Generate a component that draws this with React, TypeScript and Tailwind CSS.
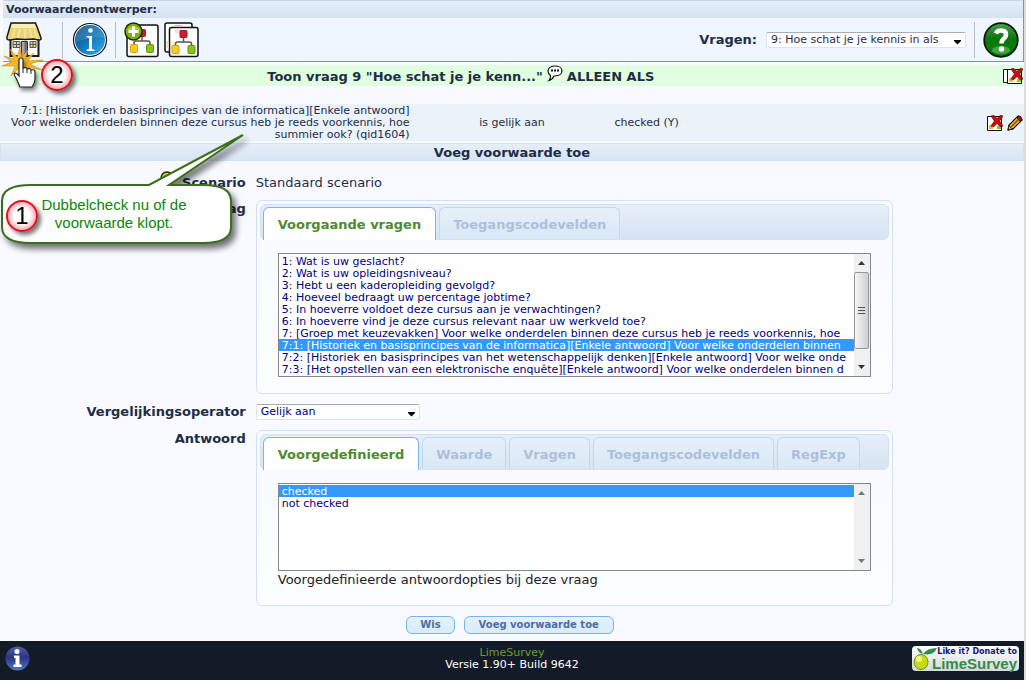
import { useState } from "react";
import type { ReactNode } from "react";

const previousQuestions = [
  "1: Wat is uw geslacht?",
  "2: Wat is uw opleidingsniveau?",
  "3: Hebt u een kaderopleiding gevolgd?",
  "4: Hoeveel bedraagt uw percentage jobtime?",
  "5: In hoeverre voldoet deze cursus aan je verwachtingen?",
  "6: In hoeverre vind je deze cursus relevant naar uw werkveld toe?",
  "7: [Groep met keuzevakken] Voor welke onderdelen binnen deze cursus heb je reeds voorkennis, hoe",
  "7:1: [Historiek en basisprincipes van de informatica][Enkele antwoord] Voor welke onderdelen binnen",
  "7:2: [Historiek en basisprincipes van het wetenschappelijk denken][Enkele antwoord] Voor welke onde",
  "7:3: [Het opstellen van een elektronische enquête][Enkele antwoord] Voor welke onderdelen binnen d",
];

const answers = ["checked", "not checked"];

function HomeIcon() {
  return (
    <svg width="36" height="36" viewBox="0 0 36 36" aria-hidden="true">
      <path d="M4.500 15h28v19h-28z" fill="#fff" stroke="#1a1a1a" strokeWidth="2" />
      <path d="M5 1h24.500l2 5 3.500 10q.5 2-2 2l-6-1-8 .5-8-.5-7 1q-4 0-3-3z" fill="#e8d478" stroke="#1c1808" strokeWidth="1.500" />
      <path d="M6 2h22.500l1.500 4H5.500z" fill="#f8efb9" />
      <path d="M9 7l-3 9M14 7l-2 9M19 7v9M24 7l2 9M28 7l3 9" stroke="#f3e7a4" strokeWidth="1.500" />
      <path d="M7 19.500h7v6H7zM24 19.500h6v6h-6z" fill="#e5d289" stroke="#555" />
      <path d="M10.500 19.500v6M7 22.500h7M27 19.500v6M24 22.500h6" stroke="#555" />
      <path d="M15.500 19.500h6V34h-6z" fill="#7b6668" stroke="#333" />
      <path d="M16 20h2.500v14H16z" fill="#a9a3b8" />
    </svg>
  );
}

function InfoIcon() {
  return (
    <svg width="36" height="36" viewBox="0 0 36 36" aria-hidden="true">
      <defs>
        <linearGradient id="info" x1="0" y1="0" x2="1" y2="1">
          <stop offset="0" stopColor="#0b4f83" />
          <stop offset="0.500" stopColor="#1377b8" />
          <stop offset="1" stopColor="#35b0ee" />
        </linearGradient>
      </defs>
      <circle cx="18" cy="18" r="16.500" fill="#fff" stroke="#111" strokeWidth="1.200" />
      <circle cx="18" cy="18" r="15" fill="url(#info)" />
      <path d="M4 20a14 14 0 0 1 28-5q-16 0-28 5z" fill="#fff" opacity="0.12" />
      <circle cx="18.500" cy="8.500" r="2.300" fill="#fff" />
      <path d="M14.500 14h5.500v13l2.500.8v1.200h-8v-1.200l2.500-.8V16l-2.500-.8z" fill="#fff" />
    </svg>
  );
}

function Tree() {
  return (
    <g>
      <path d="M19 14v5M11 23v-2q0-2 2-2h12q2 0 2 2v2" fill="none" stroke="#555" strokeWidth="1.500" />
      <rect x="15.500" y="7.500" width="7" height="7" rx="1" fill="#cf1f2b" stroke="#9d1520" />
      <rect x="7.500" y="22.500" width="7" height="8" rx="1" fill="#ffc928" stroke="#d79b0c" />
      <rect x="23.500" y="22.500" width="7" height="8" rx="1" fill="#8bc514" stroke="#5f9610" />
    </g>
  );
}

function AddConditionIcon() {
  return (
    <svg width="36" height="36" viewBox="0 0 36 36" aria-hidden="true">
      <rect x="3" y="3" width="31" height="31.500" rx="2" fill="#fff" stroke="#111" strokeWidth="1.500" />
      <g transform="translate(-1 0)">
        <Tree />
      </g>
      <circle cx="9.500" cy="9.500" r="8.500" fill="#7fae13" stroke="#1d2b05" strokeWidth="1.500" />
      <path d="M3 8a7 6 0 0 1 13 0q-6 3-13 0z" fill="#b6d858" opacity="0.7" />
      <path d="M9.500 4.500v10M4.500 9.500h10" stroke="#fff" strokeWidth="3" />
    </svg>
  );
}

function CopyConditionIcon() {
  return (
    <svg width="36" height="36" viewBox="0 0 36 36" aria-hidden="true">
      <rect x="1" y="1" width="27" height="29" rx="2" fill="#fff" stroke="#111" strokeWidth="1.500" />
      <rect x="5.500" y="5.500" width="28.500" height="29" rx="2" fill="#fff" stroke="#111" strokeWidth="1.500" />
      <rect x="11" y="3" width="7" height="2" fill="#efb3b8" />
      <rect x="11" y="6.500" width="7" height="5" rx="1" fill="#f9dfe1" />
      <rect x="2.500" y="19" width="2" height="7" fill="#fbe3a4" />
      <rect x="7" y="19" width="4" height="5" fill="#fff4d2" />
      <g transform="translate(.5 1)">
        <Tree />
      </g>
    </svg>
  );
}

function HelpIcon() {
  return (
    <svg width="36" height="36" viewBox="0 0 36 36" aria-hidden="true">
      <defs>
        <linearGradient id="help" x1="0" y1="0" x2="0" y2="1">
          <stop offset="0" stopColor="#4f9e4f" />
          <stop offset="0.450" stopColor="#0d750d" />
          <stop offset="1" stopColor="#078007" />
        </linearGradient>
      </defs>
      <circle cx="18" cy="18" r="16.800" fill="url(#help)" stroke="#0a1a0a" strokeWidth="1.800" />
      <ellipse cx="18" cy="28" rx="9" ry="4" fill="#8ed08e" opacity="0.45" />
      <path d="M13 11.500q1-3 5-3 5 0 5 4 0 2.500-2.500 4.500-2 1.500-2 4.500" fill="none" stroke="#fff" strokeWidth="4.500" />
      <circle cx="18.500" cy="27" r="2.700" fill="#fff" />
    </svg>
  );
}

function BalloonIcon() {
  return (
    <svg className="mx-1 inline-block -translate-y-1" width="16" height="17" viewBox="0 0 16 17" aria-hidden="true">
      <path d="M8 1c4 0 7 2 7 5s-3 5-7 5l-1 0q-2 4-5 4.500 2-2 1.500-5Q1 9 1 6c0-3 3-5 7-5z" fill="#fff" stroke="#111" strokeWidth="1.200" />
      <path d="M4 5.500h2M7 5.500h2M10 5.500h2" stroke="#111" strokeWidth="2" />
    </svg>
  );
}

function DeleteIcon({ stacked = false }: { stacked?: boolean }) {
  return (
    <svg width={stacked ? 20 : 16} height="16" viewBox={stacked ? "-4 0 20 16" : "0 0 16 16"} aria-hidden="true">
      {stacked && <path d="M-3.500 1.500h5v13h-5z" fill="#fff" stroke="#111" />}
      <path d="M.5 1.500h14v14H.5z" fill="#fff" stroke="#111" />
      <path d="M2 10h4v4H2z" fill="#f5b81c" />
      <path d="M10 11h4v3h-4z" fill="#8bc514" />
      <path d="M4 1l3-.5 3 3 3-3 3 .5-3.500 5L16 11l-3 .5-3-3-3 3-3-.5L7.500 6z" fill="#d00d0d" stroke="#5c0505" strokeWidth="0.800" />
    </svg>
  );
}

function PencilIcon() {
  return (
    <svg width="16" height="16" viewBox="0 0 16 16" aria-hidden="true">
      <path d="M1 15l1-5L11 1q3 0 4 4l-9 9z" fill="#f0b832" stroke="#111" strokeWidth="1.200" />
      <path d="M4 12l8-8" stroke="#7a4c10" strokeWidth="1.500" />
      <path d="M11 1q3 0 4 4l-2 1-3-3z" fill="#c3131c" stroke="#3a0508" />
      <path d="M1 15l1-5 1.500 3 2.500 1z" fill="#e9d9b0" stroke="#111" strokeWidth="0.800" />
      <path d="M1 15l.5-2 1.500 1.500z" fill="#111" />
    </svg>
  );
}

function Badge({ n, className }: { n: number; className: string }) {
  return (
    <span
      className={`absolute flex size-8 items-center justify-center rounded-full border-2 border-[#e01020] bg-[radial-gradient(circle,#fff_40%,#f4a4aa_75%)] font-['Liberation_Sans',sans-serif] text-2xl leading-none text-black shadow-[3px_3px_4px_rgba(0,0,0,0.55)] ${className}`}
    >
      {n}
    </span>
  );
}

function ClickPointer() {
  return (
    <svg className="absolute top-12 left-0.5" width="46" height="46" viewBox="0 0 46 46" aria-hidden="true">
      <path
        d="M18 0l2 9 6-7-3 9 9-6-6 8 15-1-13 4 12 6-14-3 5 7-9-6-2 8-3-8-8 8 4-10L0 18l10-4-8-6 10 3L8 1l7 8z"
        fill="#f3b928"
        stroke="#c98a10"
        strokeWidth="0.600"
      />
      <path
        d="M17 12q0-2 2-2t2 2v8q4-1 4 1 4-1 4 1 4-1 4 2v7q0 4-3 8H18q-2-5-4-9-3-4-1-5 2 0 4 3z"
        fill="#fff"
        stroke="#222"
        strokeWidth="1.200"
        filter="drop-shadow(2px 3px 2px rgba(0,0,0,0.5))"
      />
      <path d="M21 20v5M25 21v4M29 22v4" stroke="#222" />
    </svg>
  );
}

function Callout() {
  return (
    <div className="pointer-events-none absolute top-32 left-0 h-30 w-64">
      <svg className="absolute inset-0 drop-shadow-[4px_5px_3px_rgba(0,0,0,0.55)]" width="256" height="120" viewBox="0 0 256 120" aria-hidden="true">
        <path
          d="M243 7L149 57H31Q2 57 2 73v26q0 16 29 16h172q28 0 28-16V73q0-16-28-16h-34z"
          fill="#fff"
          stroke="#3b6e1c"
          strokeWidth="2"
        />
      </svg>
      <p className="absolute top-17 left-6 w-45 text-center font-['Liberation_Sans',sans-serif] text-[15px] leading-[18px] text-[#0a860a]">
        Dubbelcheck nu of de
        <br />
        voorwaarde klopt.
      </p>
      <Badge n={1} className="top-18 left-1.5" />
    </div>
  );
}

interface DropdownProps {
  id: string;
  options: string[];
  className: string;
}

function Dropdown({ id, options, className }: DropdownProps) {
  return (
    <div className={`relative ${className}`}>
      <select
        id={id}
        className="block h-4 w-full appearance-none rounded-xs border border-[#e2e3ea] border-t-[#abadb3] bg-white pr-5 pl-1 text-[11px] leading-[14px]"
      >
        {options.map((option) => (
          <option key={option}>{option}</option>
        ))}
      </select>
      <svg className="pointer-events-none absolute top-2 right-1" width="9" height="5" viewBox="0 0 9 5" aria-hidden="true">
        <path d="M1 0h7v1L4.500 4.500 1 1z" fill="#000" />
      </svg>
    </div>
  );
}

interface ListBoxProps {
  label: string;
  options: string[];
  selected: string;
  scrollable?: boolean;
  className: string;
}

function ListBox({ label, options, selected, scrollable, className }: ListBoxProps) {
  return (
    <div className={`flex border border-[#82878f] bg-white ${className}`}>
      <select
        size={10}
        aria-label={label}
        defaultValue={selected}
        className="h-full min-w-0 flex-1 appearance-none overflow-hidden bg-white py-px text-[11px] text-[#00007f] outline-none"
      >
        {options.map((option) => (
          <option
            key={option}
            className="h-3 min-h-0 overflow-hidden px-[3px] py-0 leading-3 whitespace-nowrap checked:bg-linear-to-r checked:from-[#3399ff] checked:to-[#3399ff] checked:[-webkit-text-fill-color:#fff]"
          >
            {option}
          </option>
        ))}
      </select>
      <div className="flex w-4 shrink-0 flex-col items-center bg-[#f0f0f0]" aria-hidden="true">
        <svg className="my-[7px]" width="7" height="4" viewBox="0 0 7 4">
          <path d="M0 4h7L3.500 0z" fill={scrollable ? "#333" : "#777"} />
        </svg>
        {scrollable && (
          <div className="flex h-[77px] w-[15px] flex-col items-center justify-center gap-0.5 rounded-xs border border-[#979797] bg-linear-to-r from-[#f5f5f5] to-[#cfcfcf]">
            <span className="h-px w-[7px] bg-[#555]" />
            <span className="h-px w-[7px] bg-[#555]" />
            <span className="h-px w-[7px] bg-[#555]" />
          </div>
        )}
        <svg className="mt-auto mb-[7px]" width="7" height="4" viewBox="0 0 7 4">
          <path d="M0 0h7L3.500 4z" fill={scrollable ? "#333" : "#777"} />
        </svg>
      </div>
    </div>
  );
}

function TabPanel({ tabs, children }: { tabs: string[]; children: ReactNode }) {
  const [active, setActive] = useState(tabs[0]);

  return (
    <div className="w-full max-w-[637px] rounded-md border border-[#d0e1f5] bg-linear-to-b from-[#f8faff] to-[#fcfdff] p-[3px] pb-4">
      <div
        role="tablist"
        className="flex h-9 items-end gap-[3px] rounded-md border border-[#d3e2f2] bg-linear-to-b from-[#e6eef8] to-[#d6e4f3] pl-0.5"
      >
        {tabs.map((tab) => (
          <button
            key={tab}
            type="button"
            role="tab"
            aria-selected={tab === active}
            onClick={() => setActive(tab)}
            className={
              tab === active
                ? "-mb-px h-[33px] rounded-t-md border border-b-0 border-[#79b7e7] bg-white px-3.5 pt-0.5 text-[13px] font-bold text-[#4f8a2e]"
                : "h-8 rounded-t-md border border-b-0 border-[#bddaf0] bg-linear-to-b from-[#e5f0f9] to-[#d9e8f6] px-[13px] pt-0.5 text-[13px] font-bold text-[#aebfdc]"
            }
          >
            {tab}
          </button>
        ))}
      </div>
      <div className="px-[18px] pt-[13px]">{children}</div>
    </div>
  );
}

function Separator() {
  return <span className="block h-9 w-px shrink-0 bg-[#b4bcc8]" />;
}

export default function App() {
  return (
    <div className="relative flex min-h-screen flex-col border-r-2 border-[#dcdcdc] bg-[#f8faff] font-['DejaVu_Sans',sans-serif] text-[13px] leading-4 text-[#1d2d45]">
      <header className="ml-[3px] border-r border-b border-[#7d93bd]">
        <h1 className="h-[18px] border-t border-[#c5d6ea] bg-linear-to-b from-[#e6eef8] to-[#d4e2f3] pl-[3px] text-[11px] leading-[17px] font-bold">
          Voorwaardenontwerper:
        </h1>
        <div className="flex h-[43px] items-center bg-[#eff6ff] pr-1 pl-[3px]">
          <button type="button" aria-label="Terug naar enquête" className="mr-5">
            <HomeIcon />
          </button>
          <Separator />
          <button type="button" aria-label="Informatie" className="mr-[7px] ml-[9px]">
            <InfoIcon />
          </button>
          <Separator />
          <button type="button" aria-label="Voorwaarde toevoegen" className="ml-2">
            <AddConditionIcon />
          </button>
          <button type="button" aria-label="Voorwaarden kopiëren" className="ml-1">
            <CopyConditionIcon />
          </button>
          <label htmlFor="question" className="mr-[9px] ml-auto font-bold">
            Vragen:
          </label>
          <Dropdown id="question" options={["9: Hoe schat je je kennis in als"]} className="mr-2 w-50" />
          <Separator />
          <button type="button" aria-label="Help" className="ml-2">
            <HelpIcon />
          </button>
        </div>
      </header>

      <div className="mt-[3px] flex h-[21px] items-center bg-[#e0ffe0]">
        <h2 className="w-[90%] pt-1 text-center font-bold whitespace-nowrap">
          Toon vraag 9 "Hoe schat je je kenn..."
          <BalloonIcon />
          ALLEEN ALS
        </h2>
        <button type="button" aria-label="Alle voorwaarden verwijderen" className="mr-px ml-auto">
          <DeleteIcon stacked />
        </button>
      </div>

      <table className="mt-[18px] w-full table-fixed bg-[#ebf2fa] text-[11px] leading-3">
        <tbody>
          <tr>
            <td className="w-[40%] pt-px pl-0.5 text-right">
              7:1: [Historiek en basisprincipes van de informatica][Enkele antwoord]
              <br />
              Voor welke onderdelen binnen deze cursus heb je reeds voorkennis, hoe
              <br />
              summier ook? (qid1604)
            </td>
            <td className="w-[20%] pt-px text-center">is gelijk aan</td>
            <td className="w-[30%] pt-px">checked (Y)</td>
            <td>
              <div className="mr-px flex justify-end gap-1">
                <button type="button" aria-label="Voorwaarde verwijderen">
                  <DeleteIcon />
                </button>
                <button type="button" aria-label="Voorwaarde bewerken">
                  <PencilIcon />
                </button>
              </div>
            </td>
          </tr>
        </tbody>
      </table>

      <h2 className="mt-0.5 h-[18px] border border-[#d3e2f2] bg-linear-to-b from-[#e6eef8] to-[#d8e5f4] text-center leading-[18px] font-bold">
        Voeg voorwaarde toe
      </h2>

      <form className="flex flex-col" onSubmit={(e) => e.preventDefault()}>
        <div className="mt-3.5 flex gap-2.5">
          <span className="flex w-[24%] shrink-0 items-start justify-end gap-2 font-bold">
            <svg width="14" height="14" viewBox="0 0 14 14" className="-mt-1" aria-hidden="true">
              <circle cx="7" cy="7" r="6" fill="#e3dc12" stroke="#222" strokeWidth="1.500" />
            </svg>
            Scenario
          </span>
          <span>Standaard scenario</span>
        </div>

        <div className="mt-[9px] flex gap-2.5">
          <span className="w-[24%] shrink-0 pt-px text-right font-bold">Vraag</span>
          <TabPanel tabs={["Voorgaande vragen", "Toegangscodevelden"]}>
            <ListBox
              label="Vraag"
              options={previousQuestions}
              selected={previousQuestions[7]}
              scrollable
              className="h-31"
            />
          </TabPanel>
        </div>

        <div className="mt-2.5 flex items-center gap-2.5">
          <label htmlFor="operator" className="w-[24%] shrink-0 text-right font-bold">
            Vergelijkingsoperator
          </label>
          <Dropdown id="operator" options={["Gelijk aan"]} className="w-41 text-[#00007f]" />
        </div>

        <div className="mt-2.5 flex gap-2.5">
          <span className="w-[24%] shrink-0 pt-px text-right font-bold">Antwoord</span>
          <TabPanel tabs={["Voorgedefinieerd", "Waarde", "Vragen", "Toegangscodevelden", "RegExp"]}>
            <ListBox label="Antwoord" options={answers} selected="checked" className="h-22" />
            <p className="leading-[18px] text-[#222]">Voorgedefinieerde antwoordopties bij deze vraag</p>
          </TabPanel>
        </div>

        <div className="mt-2.5 mb-[7px] flex justify-center gap-[9px] text-[10px] font-bold text-[#4c6da8]">
          <button
            type="reset"
            className="h-[18px] rounded-md border border-[#77b5e6] bg-linear-to-b from-[#e3f1fb] to-[#d9ebf9] px-[13px]"
          >
            Wis
          </button>
          <button
            type="submit"
            className="mr-1 h-[18px] rounded-md border border-[#77b5e6] bg-linear-to-b from-[#e3f1fb] to-[#d9ebf9] px-3.5"
          >
            Voeg voorwaarde toe
          </button>
        </div>
      </form>

      <footer className="flex flex-1 items-start justify-between bg-[#141b28] px-[5px] pt-[5px] text-[11px] leading-3 text-white">
        <div className="flex-1">
          <svg width="25" height="25" viewBox="0 0 25 25" aria-hidden="true">
            <defs>
              <linearGradient id="footer-info" x1="0" y1="0" x2="0" y2="1">
                <stop offset="0" stopColor="#5560a8" />
                <stop offset="0.450" stopColor="#283487" />
                <stop offset="1" stopColor="#4f79b8" />
              </linearGradient>
            </defs>
            <circle cx="12.500" cy="12.500" r="12" fill="url(#footer-info)" />
            <circle cx="12" cy="5.500" r="2.500" fill="#fff" />
            <path d="M9 9.500h5.500v9h2V21H8.500v-2.500h2V12H9z" fill="#fff" />
          </svg>
        </div>
        <p className="pt-px text-center">
          <a href="#" className="text-[#6e9a2a]">
            LimeSurvey
          </a>
          <br />
          Versie 1.90+ Build 9642
        </p>
        <div className="flex flex-1 justify-end">
          <a
            href="#"
            className="relative flex h-[25px] w-[107px] flex-col items-end rounded-sm bg-linear-to-b from-white to-[#d5d8dc] pr-0.5 text-right font-bold"
          >
            <svg className="absolute top-0 left-0" width="26" height="25" viewBox="0 0 26 25" aria-hidden="true">
              <ellipse cx="9" cy="16" rx="7" ry="7.500" fill="#c5dc12" stroke="#63991a" />
              <ellipse cx="7" cy="13" rx="3" ry="3" fill="#f4f88a" />
              <path d="M11 8Q9 2 5 2q1 5 6 6zM11 8q4-6 14-6-3 8-14 6z" fill="#2f8f4a" />
            </svg>
            <span className="font-['DejaVu_Sans',sans-serif] text-[8px] leading-[11px] text-[#16166e]">Like it? Donate to</span>
            <span className="font-['Liberation_Sans',sans-serif] text-[15px] leading-[13px] text-[#358a45]">LimeSurvey</span>
          </a>
        </div>
      </footer>

      <Callout />
      <ClickPointer />
      <Badge n={2} className="top-[59px] left-[41px]" />
    </div>
  );
}
